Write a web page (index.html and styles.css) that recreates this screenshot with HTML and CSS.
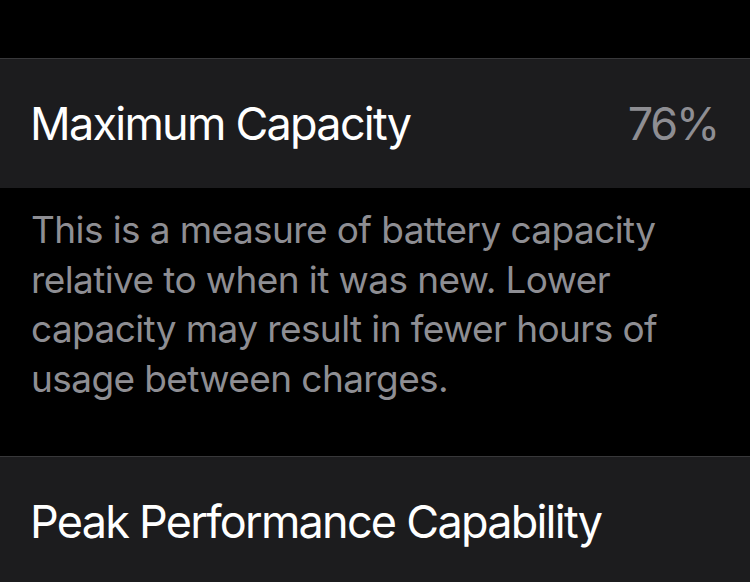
FILE: index.html
```html
<!DOCTYPE html>
<html>
<head>
<meta charset="utf-8">
<link rel="stylesheet" href="styles.css">
</head>
<body>
<div class="top"></div>
<div class="row">
  <span class="label">Maximum Capacity</span>
  <span class="value">76%</span>
</div>
<div class="footer">
  <p>This is a measure of battery capacity relative to when it was new. Lower capacity may result in fewer hours of usage between charges.</p>
</div>
<div class="row">
  <span class="label">Peak Performance Capability</span>
</div>
</body>
</html>
```
FILE: styles.css
```css
html, body {
  margin: 0;
  padding: 0;
  background: #000;
  width: 750px;
  height: 582px;
  overflow: hidden;
  font-family: Inter, "Noto Sans", sans-serif;
}
.top {
  height: 58px;
}
.row {
  height: 130px;
  background: #1c1c1e;
  border-top: 1px solid #38383a;
  box-sizing: border-box;
  display: flex;
  align-items: center;
  justify-content: space-between;
  padding: 0 32px 0 30px;
}
.label {
  color: #fff;
  font-size: 45px;
  letter-spacing: -1.75px;
}
.value {
  color: #8e8e93;
  font-size: 45px;
  letter-spacing: -2.2px;
}
.footer {
  height: 268px;
  padding: 0 31px;
  box-sizing: border-box;
}
.footer p {
  margin: 0;
  padding-top: 17px;
  color: #8e8e93;
  font-size: 37px;
  line-height: 49.7px;
  letter-spacing: -0.6px;
}
```
